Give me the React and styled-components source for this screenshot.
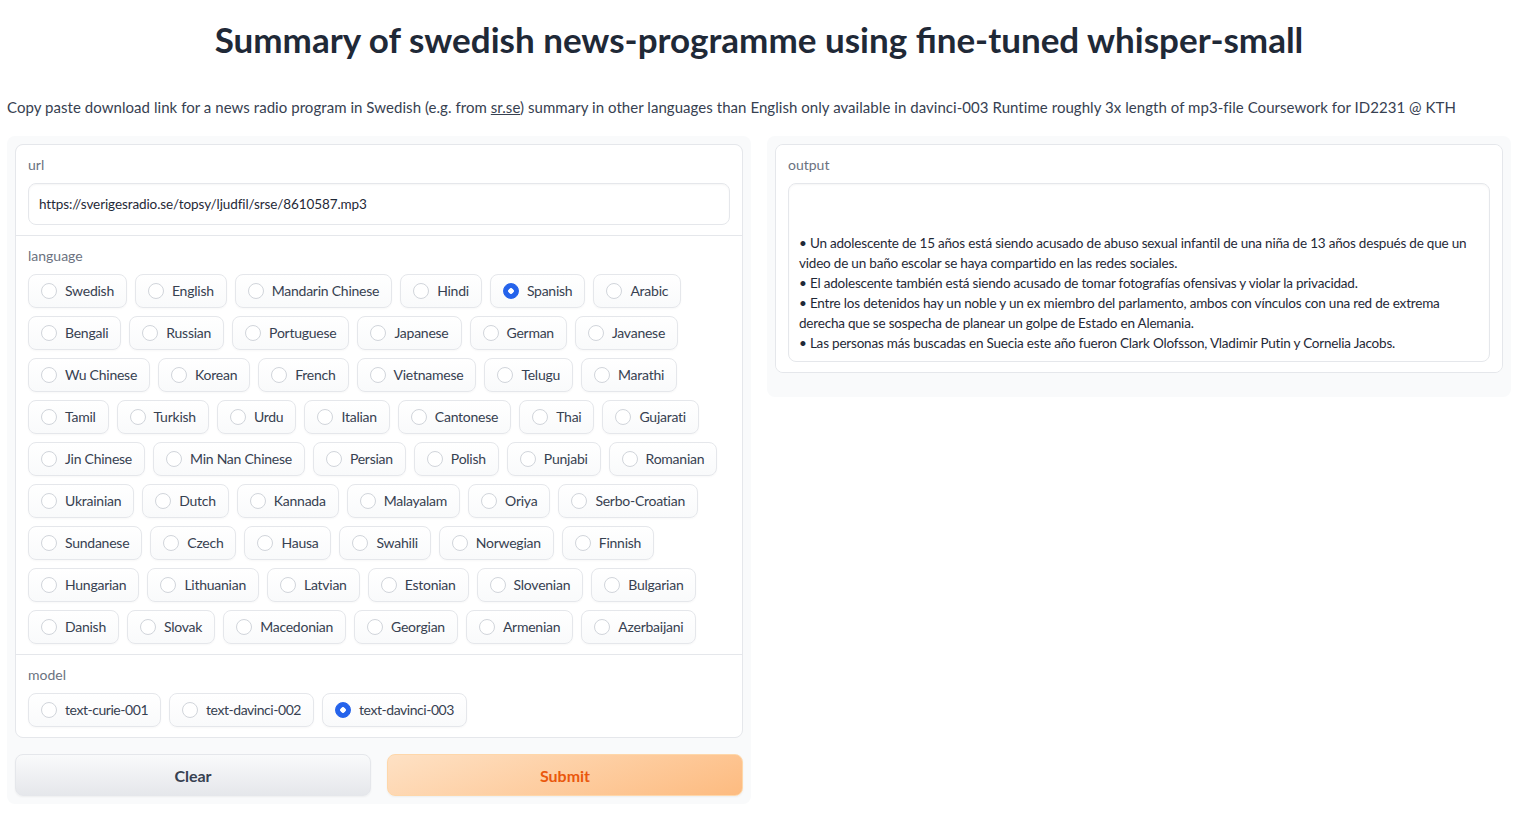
import React, { useState } from "react";
import styled, { createGlobalStyle } from "styled-components";

const languages = [
  "Swedish", "English", "Mandarin Chinese", "Hindi", "Spanish", "Arabic",
  "Bengali", "Russian", "Portuguese", "Japanese", "German", "Javanese",
  "Wu Chinese", "Korean", "French", "Vietnamese", "Telugu", "Marathi",
  "Tamil", "Turkish", "Urdu", "Italian", "Cantonese", "Thai", "Gujarati",
  "Jin Chinese", "Min Nan Chinese", "Persian", "Polish", "Punjabi", "Romanian",
  "Ukrainian", "Dutch", "Kannada", "Malayalam", "Oriya", "Serbo-Croatian",
  "Sundanese", "Czech", "Hausa", "Swahili", "Norwegian", "Finnish",
  "Hungarian", "Lithuanian", "Latvian", "Estonian", "Slovenian", "Bulgarian",
  "Danish", "Slovak", "Macedonian", "Georgian", "Armenian", "Azerbaijani",
];

const models = ["text-curie-001", "text-davinci-002", "text-davinci-003"];

const summary = `

• Un adolescente de 15 años está siendo acusado de abuso sexual infantil de una niña de 13 años después de que un video de un baño escolar se haya compartido en las redes sociales.
• El adolescente también está siendo acusado de tomar fotografías ofensivas y violar la privacidad.
• Entre los detenidos hay un noble y un ex miembro del parlamento, ambos con vínculos con una red de extrema derecha que se sospecha de planear un golpe de Estado en Alemania.
• Las personas más buscadas en Suecia este año fueron Clark Olofsson, Vladimir Putin y Cornelia Jacobs.`;

const RadioGroup = ({ options, value, onChange, tight }) => (
  <Options>
    {options.map((o) => (
      <Option key={o} tight={tight}>
        <Dot type="radio" checked={value === o} onChange={() => onChange(o)} />
        {o}
      </Option>
    ))}
  </Options>
);

const App = () => {
  const [url, setUrl] = useState("https://sverigesradio.se/topsy/ljudfil/srse/8610587.mp3");
  const [lang, setLang] = useState("Spanish");
  const [model, setModel] = useState("text-davinci-003");

  return (
    <>
      <Global />
      <Page>
        <Title>Summary of swedish news-programme using fine-tuned whisper-small</Title>
        <Description>
          Copy paste download link for a news radio program in Swedish (e.g. from <a href="#">sr.se</a>) summary in other
          languages than English only available in davinci-003 Runtime roughly 3x length of mp3-file Coursework for ID2231 @ KTH
        </Description>
        <Columns>
          <Panel>
            <Form>
              <Block>
                <Label>url</Label>
                <Input value={url} onChange={(e) => setUrl(e.target.value)} />
              </Block>
              <Block>
                <Label>language</Label>
                <RadioGroup options={languages} value={lang} onChange={setLang} />
              </Block>
              <Block>
                <Label>model</Label>
                <RadioGroup options={models} value={model} onChange={setModel} tight />
              </Block>
            </Form>
            <Buttons>
              <Button>Clear</Button>
              <Button primary>Submit</Button>
            </Buttons>
          </Panel>
          <Panel output>
            <Form>
              <Block>
                <Label>output</Label>
                <Output readOnly value={summary} />
              </Block>
            </Form>
          </Panel>
        </Columns>
      </Page>
    </>
  );
};

const Global = createGlobalStyle`
  body {
    margin: 0;
    background: #fff;
    font-family: "Lato", "Liberation Sans", sans-serif;
    color: #374151;
  }
`;

const Page = styled.div`
  padding: 0 23px 0 7px;
`;

const Title = styled.h1`
  margin: 17px 0 0;
  text-align: center;
  font-size: 35px;
  line-height: 44px;
  font-weight: 700;
  color: #1f2937;
`;

const Description = styled.p`
  margin: 34px 0 17px;
  font-size: 15px;
  letter-spacing: 0.05px;
  line-height: 24px;
  color: #374151;

  a {
    color: inherit;
  }
`;

const Columns = styled.div`
  display: grid;
  grid-template-columns: 1fr 1fr;
  gap: 16px;
  align-items: start;
`;

const Panel = styled.div`
  background: #f9fafb;
  border-radius: 8px;
  padding: ${(p) => (p.output ? "8px 8px 24px" : "8px")};
  display: flex;
  flex-direction: column;
  gap: 16px;
`;

const Form = styled.div`
  display: flex;
  flex-direction: column;
  gap: 1px;
  background: #e5e7eb;
  border: 1px solid #e5e7eb;
  border-radius: 8px;
  overflow: hidden;
`;

const Block = styled.div`
  background: #fff;
  padding: 10px 12px;
`;

const Label = styled.div`
  font-size: 14px;
  line-height: 20px;
  color: #6b7280;
  margin-bottom: 8px;
`;

const Input = styled.input`
  box-sizing: border-box;
  width: 100%;
  height: 42px;
  padding: 0 10px;
  border: 1px solid #e5e7eb;
  border-radius: 8px;
  font: inherit;
  font-size: 13.5px;
  letter-spacing: -0.1px;
  color: #1f2937;
  box-shadow: inset 0 1px 2px rgba(0, 0, 0, 0.04);
  outline: none;
`;

const Output = styled.textarea`
  box-sizing: border-box;
  width: 100%;
  height: 179px;
  padding: 9px 10px;
  border: 1px solid #e5e7eb;
  border-radius: 8px;
  font: inherit;
  font-size: 13.5px;
  letter-spacing: -0.2px;
  line-height: 20px;
  color: #1f2937;
  resize: none;
  overflow: hidden;
  display: block;
  box-shadow: inset 0 1px 2px rgba(0, 0, 0, 0.04);
  outline: none;
`;

const Options = styled.div`
  display: flex;
  flex-wrap: wrap;
  gap: 8px;
`;

const Option = styled.label`
  display: flex;
  align-items: center;
  gap: 8px;
  padding: 6px 12px;
  border: 1px solid #e5e7eb;
  border-radius: 8px;
  background: linear-gradient(to bottom, #ffffff, #f9fafb);
  box-shadow: 0 1px 2px rgba(0, 0, 0, 0.03);
  font-size: 14px;
  letter-spacing: ${(p) => (p.tight ? "-0.45px" : "-0.25px")};
  line-height: 20px;
  color: #374151;
  cursor: pointer;
`;

const Dot = styled.input`
  appearance: none;
  margin: 0;
  width: 16px;
  height: 16px;
  border-radius: 50%;
  border: 1px solid #d1d5db;
  background: #fff;
  box-sizing: border-box;

  &:checked {
    border-color: #2563eb;
    background: radial-gradient(circle, #fff 0 2.5px, #2563eb 3px);
  }
`;

const Buttons = styled.div`
  display: grid;
  grid-template-columns: 1fr 1fr;
  gap: 16px;
`;

const Button = styled.button`
  height: 42px;
  border-radius: 8px;
  font-family: inherit;
  font-size: 16px;
  font-weight: 700;
  cursor: pointer;
  border: 1px solid ${(p) => (p.primary ? "#fed7aa" : "#e5e7eb")};
  color: ${(p) => (p.primary ? "#ea580c" : "#374151")};
  background: ${(p) =>
    p.primary
      ? "linear-gradient(160deg, #fee1c4, #fdbb80)"
      : "linear-gradient(to bottom, #f9fafb, #e5e7eb)"};
  box-shadow: 0 1px 2px rgba(0, 0, 0, 0.05);
`;

export default App;
